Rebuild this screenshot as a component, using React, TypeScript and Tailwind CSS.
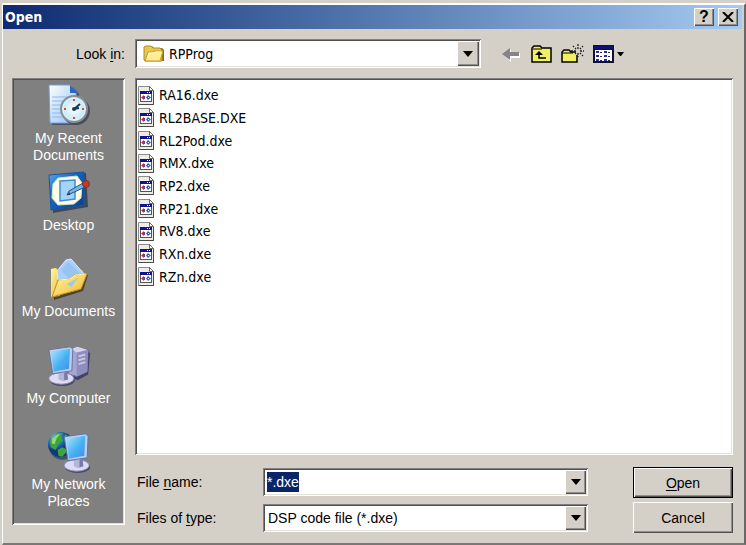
import { useEffect, useRef } from "react";
import type { ReactNode } from "react";

const sunken =
  "p-0.5 shadow-[inset_1px_1px_#808080,inset_-1px_-1px_#ffffff,inset_2px_2px_#505050,inset_-2px_-2px_#e4e1da]";
const raised =
  "bg-[#d4d0c8] shadow-[inset_1px_1px_#ffffff,inset_-1px_-1px_#505050,inset_-2px_-2px_#909090]";
const uiFont = "font-['Liberation_Sans',Arial,sans-serif]";
const listFont = "font-['DejaVu_Sans_Condensed','DejaVu_Sans',sans-serif]";

function RecentIcon() {
  return (
    <svg width="44" height="44" viewBox="0 0 44 44" aria-hidden="true">
      <defs>
        <linearGradient id="paper" x1="0" y1="0" x2="1" y2="1">
          <stop offset="0" stopColor="#fff" />
          <stop offset="1" stopColor="#8fc0f4" />
        </linearGradient>
        <radialGradient id="dial">
          <stop offset="0" stopColor="#fff" />
          <stop offset="1" stopColor="#b8e4f4" />
        </radialGradient>
      </defs>
      <path d="M4 3h22l6 7v31H5z" fill="#4d5360" />
      <path d="M2 1h21l6 7v31H3z" fill="url(#paper)" stroke="#6d9fe4" />
      <path d="M23 1v8h8z" fill="#2769c5" />
      <path d="M5 13h19M5 17h12M5 21h10M5 25h9M5 29h9M5 33h12" stroke="#8eb7ee" />
      <circle cx="29" cy="27" r="14" fill="#4c4f57" />
      <circle cx="27" cy="25" r="13" fill="url(#dial)" stroke="#8b8f92" strokeWidth="2" />
      <circle cx="27" cy="25" r="11" fill="none" stroke="#e3f5fc" />
      <path d="M27 15v2M27 33v2M17 25h2M35 25h2" stroke="#d4502c" strokeWidth="2" />
      <path d="m27 25 6-5M27 25l5-1" stroke="#153d56" strokeWidth="2" />
      <circle cx="27" cy="25" r="2" fill="#153d56" />
    </svg>
  );
}

function DesktopIcon() {
  return (
    <svg width="44" height="44" viewBox="0 0 44 44" aria-hidden="true">
      <defs>
        <linearGradient id="desk" x1="0" y1="0" x2="1" y2="1">
          <stop offset="0" stopColor="#5ba7ee" />
          <stop offset=".4" stopColor="#1765bf" />
          <stop offset="1" stopColor="#083d91" />
        </linearGradient>
      </defs>
      <path d="m5 5 34-3 2 34L6 42z" fill="#3f4857" />
      <path d="m2 4 35-3v33L4 39z" fill="url(#desk)" stroke="#1755a3" />
      <path d="m11 7 19-2 5 7-1 15-7 6-16 1-6-7 1-14z" fill="#fffde5" stroke="#cfe5bd" />
      <path d="m13 10 15-1v19l-15 2z" fill="#a6d4f8" stroke="#428dd2" strokeWidth="1.5" />
      <path d="m22 20 14-8 2 4-15 7-3 1z" fill="#76b3e5" stroke="#23578d" />
      <path d="m20 24 3-3v3z" fill="#163d69" />
      <circle cx="39" cy="13" r="3.5" fill="#c43825" stroke="#84302b" />
    </svg>
  );
}

function DocumentsIcon() {
  return (
    <svg width="44" height="44" viewBox="0 0 44 44" aria-hidden="true">
      <defs>
        <linearGradient id="gold" x1="0" y1="0" x2="1" y2="1">
          <stop offset="0" stopColor="#fff9a3" />
          <stop offset="1" stopColor="#edb52e" />
        </linearGradient>
      </defs>
      <path d="m5 13 7-1 29 6-5 16L7 43z" fill="#4b432e" />
      <path d="m4 12 5-1 3 3 24-1-4 20-27 7z" fill="#dca931" />
      <path d="m4 12 5-1 4 5v23l-9 1z" fill="url(#gold)" />
      <path d="m10 14 9-11 5-1 14 16-13 15-14-11z" fill="#a9d0fa" stroke="#deefff" />
      <path d="m14 13 7-8 14 13-9 9z" fill="#8ebdf1" opacity=".6" />
      <path d="m5 40 6-17 12-1 4-4 13-1-6 15z" fill="url(#gold)" stroke="#c38b24" />
      <path d="m20 27 12-7-8 10z" fill="#9bcae3" />
      <path d="m12 23 11-1 5-4 11-1" fill="none" stroke="#fff9b0" />
    </svg>
  );
}

function Monitor({ id }: { id: string }) {
  return (
    <g>
      <defs>
        <linearGradient id={id} x1="0" y1="0" x2="1" y2="1">
          <stop offset="0" stopColor="#ace8ff" />
          <stop offset=".55" stopColor="#48b2f4" />
          <stop offset="1" stopColor="#408be7" />
        </linearGradient>
      </defs>
      <ellipse cx="15" cy="35" rx="13" ry="6" fill="#484a6b" />
      <ellipse cx="14" cy="33" rx="13" ry="6" fill="#dddcf2" stroke="#8e8cb5" />
      <path d="m11 25 8-1 2 10-5 2-5-2z" fill="#b6b5d8" />
      <path d="m17 27 3-1 1 8-4 1z" fill="#7978a9" />
      <path d="m1 3 22-3 3 2-1 23-20 3z" fill="#c1cce5" stroke="#5877a7" />
      <path d="m3 5 20-3-1 21-16 3z" fill={`url(#${id})`} />
    </g>
  );
}

function ComputerIcon() {
  return (
    <svg width="44" height="44" viewBox="0 0 46 44" aria-hidden="true">
      <path d="m25 7 17-2 3 4-2 22-11 6-10-4z" fill="#424266" />
      <path d="m24 4 8-2 11 3-1 23-11 5-9-3z" fill="#a8a6d0" stroke="#6f6c9d" />
      <path d="m31 8 12-3-1 23-11 5z" fill="#8f8cc0" />
      <path d="m25 4 7-2 10 3-11 3z" fill="#d5d4eb" />
      <path d="m33 12 7-2M33 16l7-2M33 20l7-2" stroke="#cac9e4" strokeWidth="2" />
      <g transform="translate(1 2)">
        <Monitor id="computer-screen" />
      </g>
    </svg>
  );
}

function NetworkIcon() {
  return (
    <svg width="44" height="44" viewBox="0 0 46 44" aria-hidden="true">
      <defs>
        <radialGradient id="ocean" cx="30%" cy="25%">
          <stop offset="0" stopColor="#8cdbff" />
          <stop offset=".5" stopColor="#267fd4" />
          <stop offset="1" stopColor="#103879" />
        </radialGradient>
      </defs>
      <circle cx="16" cy="16" r="14" fill="#3d5366" />
      <circle cx="14" cy="14" r="13" fill="url(#ocean)" />
      <path d="m3 9 7-6 7-1-3 5 3 3-5 4-3 6-5-3zm16-6 6 5 2 6-5-1-4-6zm-8 17 5-3 6 3-6 7-4-1z" fill="#3da53e" />
      <path d="m5 8 5-4 4-1-4 5-2 6-3-1z" fill="#97d66c" />
      <g transform="translate(17 3)">
        <Monitor id="network-screen" />
      </g>
    </svg>
  );
}

function FolderIcon() {
  return (
    <svg width="22" height="18" viewBox="0 0 22 18" aria-hidden="true">
      <path d="M2 5V2l2-1h5l2 2h8l2 2v11H3z" fill="#806b31" />
      <path d="M1 4V2l2-1h5l2 2h7l2 2v11H2L1 15z" fill="#eac64b" stroke="#b28a22" />
      <path d="m2 16 3-9h5l2-1h8l-3 10z" fill="#ffed91" stroke="#c49a2c" />
      <path d="m6 9-1 4M6 8h5l2-1h5" stroke="#fffacb" fill="none" />
    </svg>
  );
}

function FileIcon() {
  return (
    <svg className="shrink-0" width="18" height="21" viewBox="0 0 18 21" aria-hidden="true">
      <path d="M1.5 1.5h11l4 4v14h-15z" fill="#efece4" stroke="#8c8c8c" />
      <path d="M1.5 19.5h15v-14l-4-4" fill="none" stroke="#4a4a4a" />
      <path d="M12.5 1.5v4h4z" fill="#fff" stroke="#6a6a6a" />
      <path d="M3 6h12v11H3z" fill="#555" />
      <path d="M4 7h10v9H4z" fill="#fff" />
      <path d="M3 6h12v3H3z" fill="#10128f" />
      <path d="M10 7h1v1h-1zM12 7h1v1h-1z" fill="#fff" />
      <path d="m4 12.5 3-2.5v5z" fill="#d02050" />
      <path d="M7 11h1v3H7z" fill="#803080" />
      <path d="m9 12.5 2-2.5 3 2.5-3 2.5z" fill="#2f62bd" />
      <path d="M11 12h1v1h-1z" fill="#fff" />
    </svg>
  );
}

function DownArrow() {
  return (
    <svg width="10" height="6" viewBox="0 0 10 6" aria-hidden="true">
      <path d="M0 0h10L5 6z" fill="#000" />
    </svg>
  );
}

function Key({ children }: { children: ReactNode }) {
  return <span className="underline underline-offset-2">{children}</span>;
}

const places: { icon: ReactNode; label: string }[] = [
  { icon: <RecentIcon />, label: "My Recent Documents" },
  { icon: <DesktopIcon />, label: "Desktop" },
  { icon: <DocumentsIcon />, label: "My Documents" },
  { icon: <ComputerIcon />, label: "My Computer" },
  { icon: <NetworkIcon />, label: "My Network Places" },
];

const files = [
  "RA16.dxe",
  "RL2BASE.DXE",
  "RL2Pod.dxe",
  "RMX.dxe",
  "RP2.dxe",
  "RP21.dxe",
  "RV8.dxe",
  "RXn.dxe",
  "RZn.dxe",
];

function Toolbar() {
  return (
    <div className="ml-5 flex items-center gap-2">
      <button type="button" aria-label="Back" disabled>
        <svg width="22" height="20" viewBox="0 0 22 20">
          <path d="m3 11 7-6v4h9v5h-9v4z" fill="#fff" />
          <path d="m1 10 8-6v4h9v4H9v4z" fill="#858585" />
        </svg>
      </button>
      <button type="button" aria-label="Up one level">
        <svg width="22" height="20" viewBox="0 0 22 20">
          <path d="M1 18V4l2-2h6l2 2h9v14z" fill="#f1ef62" stroke="#000" strokeWidth="1.5" />
          <path d="M2 5h9" stroke="#000" />
          <path d="M8 9v5h7" fill="none" stroke="#000" strokeWidth="1.5" />
          <path d="m4 11 4-4 4 4z" fill="#000" />
        </svg>
      </button>
      <button type="button" aria-label="Create new folder">
        <svg width="24" height="20" viewBox="0 0 24 20">
          <path d="M1 18V8l2-2h5l2 2h6v10z" fill="#f1ef62" stroke="#000" strokeWidth="1.5" />
          <path d="M1 9h11" stroke="#000" />
          <path d="M15 4h5v7h-5z" fill="#d4d0c8" />
          <path d="M17 0v2M17 3v2M17 9v2M17 12v1M10 7h2M13 7h2M19 7h2M22 7h1M12 2l1 1M14 4l1 1M22 2l-1 1M20 4l-1 1M19 9l1 1M21 11l1 1M15 9l-1 1" stroke="#222" strokeWidth="1.3" />
        </svg>
      </button>
      <button type="button" aria-label="View menu" className="flex items-center gap-0.5">
        <svg width="22" height="20" viewBox="0 0 22 20" shapeRendering="crispEdges">
          <path d="M0 1h21v18H0z" fill="#101030" />
          <path d="M1 2h19v3H1z" fill="#101070" />
          <path d="M2 6h17v11H2z" fill="#fff" />
          <path d="M3 7h3v2H3zm8 0h3v2h-3zM3 11h3v2H3zm8 0h3v2h-3zM3 15h3v2H3zm8 0h3v2h-3z" fill="#2b2b9c" />
          <path d="M7 8h2M15 8h2M7 12h2M15 12h2M7 16h2M15 16h2" stroke="#333" />
        </svg>
        <svg width="7" height="4" viewBox="0 0 7 4">
          <path d="M0 0h7L4 4H3z" />
        </svg>
      </button>
    </div>
  );
}

export default function App() {
  const nameRef = useRef<HTMLInputElement>(null);

  useEffect(() => {
    nameRef.current?.focus();
    nameRef.current?.select();
  }, []);

  return (
    <div className={`flex min-h-screen flex-col bg-[#d4d0c8] pt-[3px] pl-0.5 text-sm text-black ${uiFont}`}>
      <div className="flex flex-1 flex-col border-t-2 border-r-2 border-b-2 border-l border-t-white border-r-[#686868] border-b-[#787878] border-l-white">
        <header className="mr-0.5 flex h-6 items-center gap-1 bg-linear-to-r from-[#0f2a70] to-[#a6caf0] pr-1 pl-0.5">
          <h1 className={`flex-1 text-sm font-bold text-white ${listFont}`}>Open</h1>
          <button type="button" aria-label="Help" className={`flex h-[18px] w-5 items-center justify-center text-base font-bold ${raised}`}>
            ?
          </button>
          <button type="button" aria-label="Close" className={`flex h-[18px] w-5 items-center justify-center ${raised}`}>
            <svg width="12" height="10" viewBox="0 0 12 10">
              <path d="m1 0 10 10M11 0 1 10" stroke="#000" strokeWidth="2" />
            </svg>
          </button>
        </header>

        <main className="flex flex-1 flex-col pt-2.5 pr-[11px] pl-[9px]">
          <div className="mb-2.5 flex items-center">
            <label htmlFor="look-in" className="w-[113px] text-right">
              Look <Key>i</Key>n:
            </label>
            <div className={`relative ml-2.5 flex h-[29px] flex-1 items-center bg-white ${sunken}`}>
              <span className="pointer-events-none absolute left-2">
                <FolderIcon />
              </span>
              <select id="look-in" className={`h-full w-full appearance-none pl-8 text-sm outline-none ${listFont}`}>
                <option>RPProg</option>
              </select>
              <span className={`pointer-events-none absolute inset-y-0.5 right-0.5 flex w-[22px] items-center justify-center ${raised}`}>
                <DownArrow />
              </span>
            </div>
            <div className="w-[252px]">
              <Toolbar />
            </div>
          </div>

          <div className="flex flex-1 gap-2.5 pb-[18px]">
            <nav className={`w-[113px] bg-[#808080] ${sunken}`} aria-label="Places">
              <ul className="grid h-[437px] grid-rows-5 pt-1">
                {places.map((place) => (
                  <li key={place.label}>
                    <button type="button" className="flex w-full flex-col items-center gap-0.5 px-1 text-center leading-[17px] text-white">
                      {place.icon}
                      <span className="max-w-[100px]">{place.label}</span>
                    </button>
                  </li>
                ))}
              </ul>
            </nav>

            <div className="flex flex-1 flex-col">
              <div className={`flex-1 bg-white ${sunken}`}>
                <ul className={`mt-1 grid h-[204px] grid-rows-9 ${listFont}`}>
                  {files.map((file) => (
                    <li key={file} className="flex items-center">
                      <button type="button" className="flex items-center gap-1">
                        <FileIcon />
                        {file}
                      </button>
                    </li>
                  ))}
                </ul>
              </div>

              <form className="mt-3 -mb-2 flex gap-[45px]" onSubmit={(event) => event.preventDefault()}>
                <div className="flex flex-1 flex-col gap-2 pt-px">
                  <div className="flex h-[28px] items-center">
                    <label htmlFor="file-name" className="w-32 pl-0.5">
                      File <Key>n</Key>ame:
                    </label>
                    <div className={`flex h-full flex-1 bg-white ${sunken}`}>
                      <input
                        id="file-name"
                        ref={nameRef}
                        defaultValue="*.dxe"
                        className="min-w-0 flex-1 pl-0.5 outline-none selection:bg-[#0a246a] selection:text-white"
                      />
                      <button type="button" aria-label="Show file names" className={`flex w-[21px] items-center justify-center ${raised}`}>
                        <DownArrow />
                      </button>
                    </div>
                  </div>
                  <div className="flex h-[28px] items-center">
                    <label htmlFor="file-type" className="w-32 pl-0.5">
                      Files of <Key>t</Key>ype:
                    </label>
                    <div className={`relative h-full flex-1 bg-white ${sunken}`}>
                      <select id="file-type" className="h-full w-full appearance-none pl-[3px] outline-none">
                        <option>DSP code file (*.dxe)</option>
                      </select>
                      <span className={`pointer-events-none absolute inset-y-0.5 right-0.5 flex w-[21px] items-center justify-center ${raised}`}>
                        <DownArrow />
                      </span>
                    </div>
                  </div>
                </div>
                <div className="flex w-[100px] flex-col gap-1">
                  <button
                    type="submit"
                    className="h-[31px] border border-black bg-[#d4d0c8] shadow-[inset_1px_1px_#ffffff,inset_-1px_-1px_#505050,inset_-2px_-2px_#909090]"
                  >
                    <Key>O</Key>pen
                  </button>
                  <button type="button" className={`h-[31px] ${raised}`}>
                    Cancel
                  </button>
                </div>
              </form>
            </div>
          </div>
        </main>
      </div>
    </div>
  );
}
